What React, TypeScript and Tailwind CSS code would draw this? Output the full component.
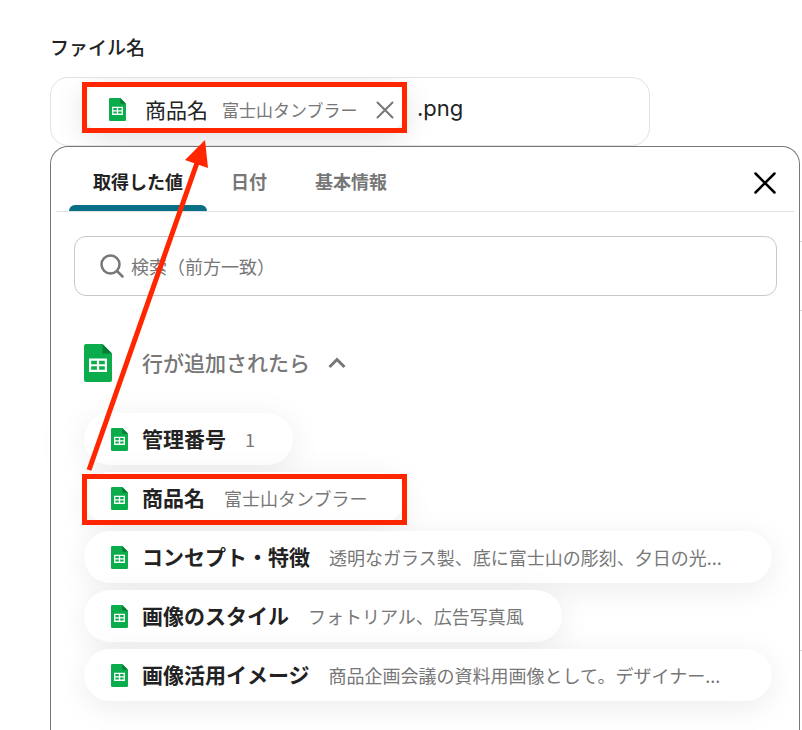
import type { ReactNode } from "react";

function SheetIcon({ className }: { className: string }) {
  return (
    <svg viewBox="0 0 28 38" className={className} aria-hidden="true">
      <path d="M2 0H18.500L28 9.500V36A2 2 0 0 1 26 38H2A2 2 0 0 1 0 36V2A2 2 0 0 1 2 0Z" fill="#0bac4b" />
      <path d="M18.500 0L28 9.500H18.500Z" fill="#0a7d35" />
      <path d="M5 14.500H23V28H5ZM7.200 16.700V20.150H12.900V16.700ZM15.100 16.700V20.150H20.800V16.700ZM7.200 22.350V25.800H12.900V22.350ZM15.100 22.350V25.800H20.800V22.350Z" fill="#fff" fillRule="evenodd" />
    </svg>
  );
}

const rows = [
  { name: "管理番号", value: "1", wide: false, marked: false },
  { name: "商品名", value: "富士山タンブラー", wide: false, marked: true },
  { name: "コンセプト・特徴", value: "透明なガラス製、底に富士山の彫刻、夕日の光...", wide: true, marked: false },
  { name: "画像のスタイル", value: "フォトリアル、広告写真風", wide: false, marked: false },
  { name: "画像活用イメージ", value: "商品企画会議の資料用画像として。デザイナー...", wide: true, marked: false },
];

function Tab({ active, children }: { active?: boolean; children: ReactNode }) {
  return (
    <button
      type="button"
      role="tab"
      aria-selected={!!active}
      className={
        active
          ? "relative h-16 px-6 pt-1 text-[18px] font-bold text-[#222]"
          : "h-16 px-6 pt-1 text-[18px] font-bold text-[#777]"
      }
    >
      {children}
      {active && <span className="absolute inset-x-0 bottom-0 h-1.5 rounded-t-md bg-[#086f86]" />}
    </button>
  );
}

export default function App() {
  return (
    <main className="relative h-screen overflow-hidden bg-white pr-0.5 pl-[50px] font-['Noto_Sans_CJK_JP',sans-serif] text-[#222]">
      <div className="absolute top-[241px] right-0 h-[70px] w-10 border-y border-[#d4d4d4]" />
      <div className="absolute top-[650px] right-0 h-[100px] w-10 border-t border-[#d4d4d4]" />
      <div className="absolute top-[412px] left-[78px] h-[51px] w-[325px] rounded-full shadow-[0_6px_45px_rgba(0,0,0,0.13)]" />

      <label htmlFor="suffix" className="block pt-8 text-[19px] leading-[30px] font-medium">
        ファイル名
      </label>
      <div className="mt-[15px] flex h-[69px] max-w-[600px] items-start overflow-hidden rounded-[18px] border border-[#e0e2e6] pt-1 pl-[31px]">
        <div className="relative flex h-[51px] w-[325px] shrink-0 items-center rounded-full pt-1 pl-[27px] shadow-[0_6px_32px_rgba(0,0,0,0.13)]">
          <SheetIcon className="h-[23px] w-[17px]" />
          <span className="ml-[19px] text-[21px] text-[#222]">商品名</span>
          <span className="ml-3.5 text-[17px] text-[#777]">富士山タンブラー</span>
          <button type="button" aria-label="削除" className="ml-[18px]">
            <svg viewBox="0 0 18 18" className="size-[18px]" fill="none" stroke="#777" strokeWidth="2" strokeLinecap="round">
              <path d="M1.500 1.500L16.500 16.500M16.500 1.500L1.500 16.500" />
            </svg>
          </button>
          <span className="pointer-events-none absolute inset-0 border-5 border-[#ff2600]" />
        </div>
        <input id="suffix" defaultValue=".png" className="h-[51px] min-w-0 flex-1 bg-transparent pl-2.5 font-['Inter',sans-serif] text-[22px] outline-none" />
      </div>

      <div className="relative h-[600px] rounded-t-[18px] border border-b-0 border-[#777] bg-white">
        <div className="mx-[5px] flex items-center justify-between border-b border-[#e2e2e2] pr-[17px] pl-[13px]">
          <div role="tablist" className="flex">
            <Tab active>取得した値</Tab>
            <Tab>日付</Tab>
            <Tab>基本情報</Tab>
          </div>
          <button type="button" aria-label="閉じる" className="pt-2">
            <svg viewBox="0 0 24 24" className="size-6" fill="none" stroke="#000" strokeWidth="2.500" strokeLinecap="round">
              <path d="M2.500 2.500L21.500 21.500M21.500 2.500L2.500 21.500" />
            </svg>
          </button>
        </div>

        <div className="mt-6 mr-[22px] ml-[23px] flex h-15 items-center rounded-xl border border-[#c8c8c8] pl-[25px]">
          <svg viewBox="0 0 24 24" className="size-6" fill="none" stroke="#777" strokeWidth="2.500" strokeLinecap="round">
            <circle cx="10.500" cy="10.500" r="9" />
            <path d="M17 17L22.500 22.500" />
          </svg>
          <input type="text" aria-label="検索" placeholder="検索（前方一致）" className="ml-[7px] h-full min-w-0 flex-1 bg-transparent text-[18px] outline-none placeholder:text-[#777]" />
        </div>

        <button type="button" className="mt-12 ml-[33px] flex h-[38px] items-center text-[21px] font-medium text-[#777]">
          <SheetIcon className="h-[38px] w-7" />
          <span className="ml-[30px]">行が追加されたら</span>
          <svg viewBox="0 0 18 12" className="ml-[18px] h-3 w-[18px]" fill="none" stroke="#777" strokeWidth="3">
            <path d="M1.500 10L9 2.500L16.500 10" />
          </svg>
        </button>

        <ul className="mt-[31px] mr-[27px] ml-[33px] flex flex-col items-start gap-[7px]">
          {rows.map((row) => (
            <li key={row.name} className={row.wide ? "relative w-full" : "relative max-w-full"}>
              <button type="button" className="flex h-[52px] w-full items-center rounded-full bg-white pr-[38px] pl-[27px] whitespace-nowrap shadow-[0_6px_32px_rgba(0,0,0,0.08)]">
                <SheetIcon className="h-[23px] w-[17px] shrink-0" />
                <span className="ml-3.5 text-[21px] font-bold">{row.name}</span>
                <span className="ml-[19px] truncate text-[18px] text-[#777]">{row.value}</span>
              </button>
              {row.marked && <span className="pointer-events-none absolute -inset-x-0.5 top-0.5 -bottom-px border-5 border-[#ff2600]" />}
            </li>
          ))}
        </ul>
      </div>

      <svg viewBox="0 0 140 340" className="pointer-events-none absolute top-[136px] left-[80px] h-[340px] w-[140px]" aria-hidden="true">
        <path d="M9 334L118 24" stroke="#ff2600" strokeWidth="5" />
        <path d="M125 4L128 32L105 24Z" fill="#ff2600" />
      </svg>
    </main>
  );
}
